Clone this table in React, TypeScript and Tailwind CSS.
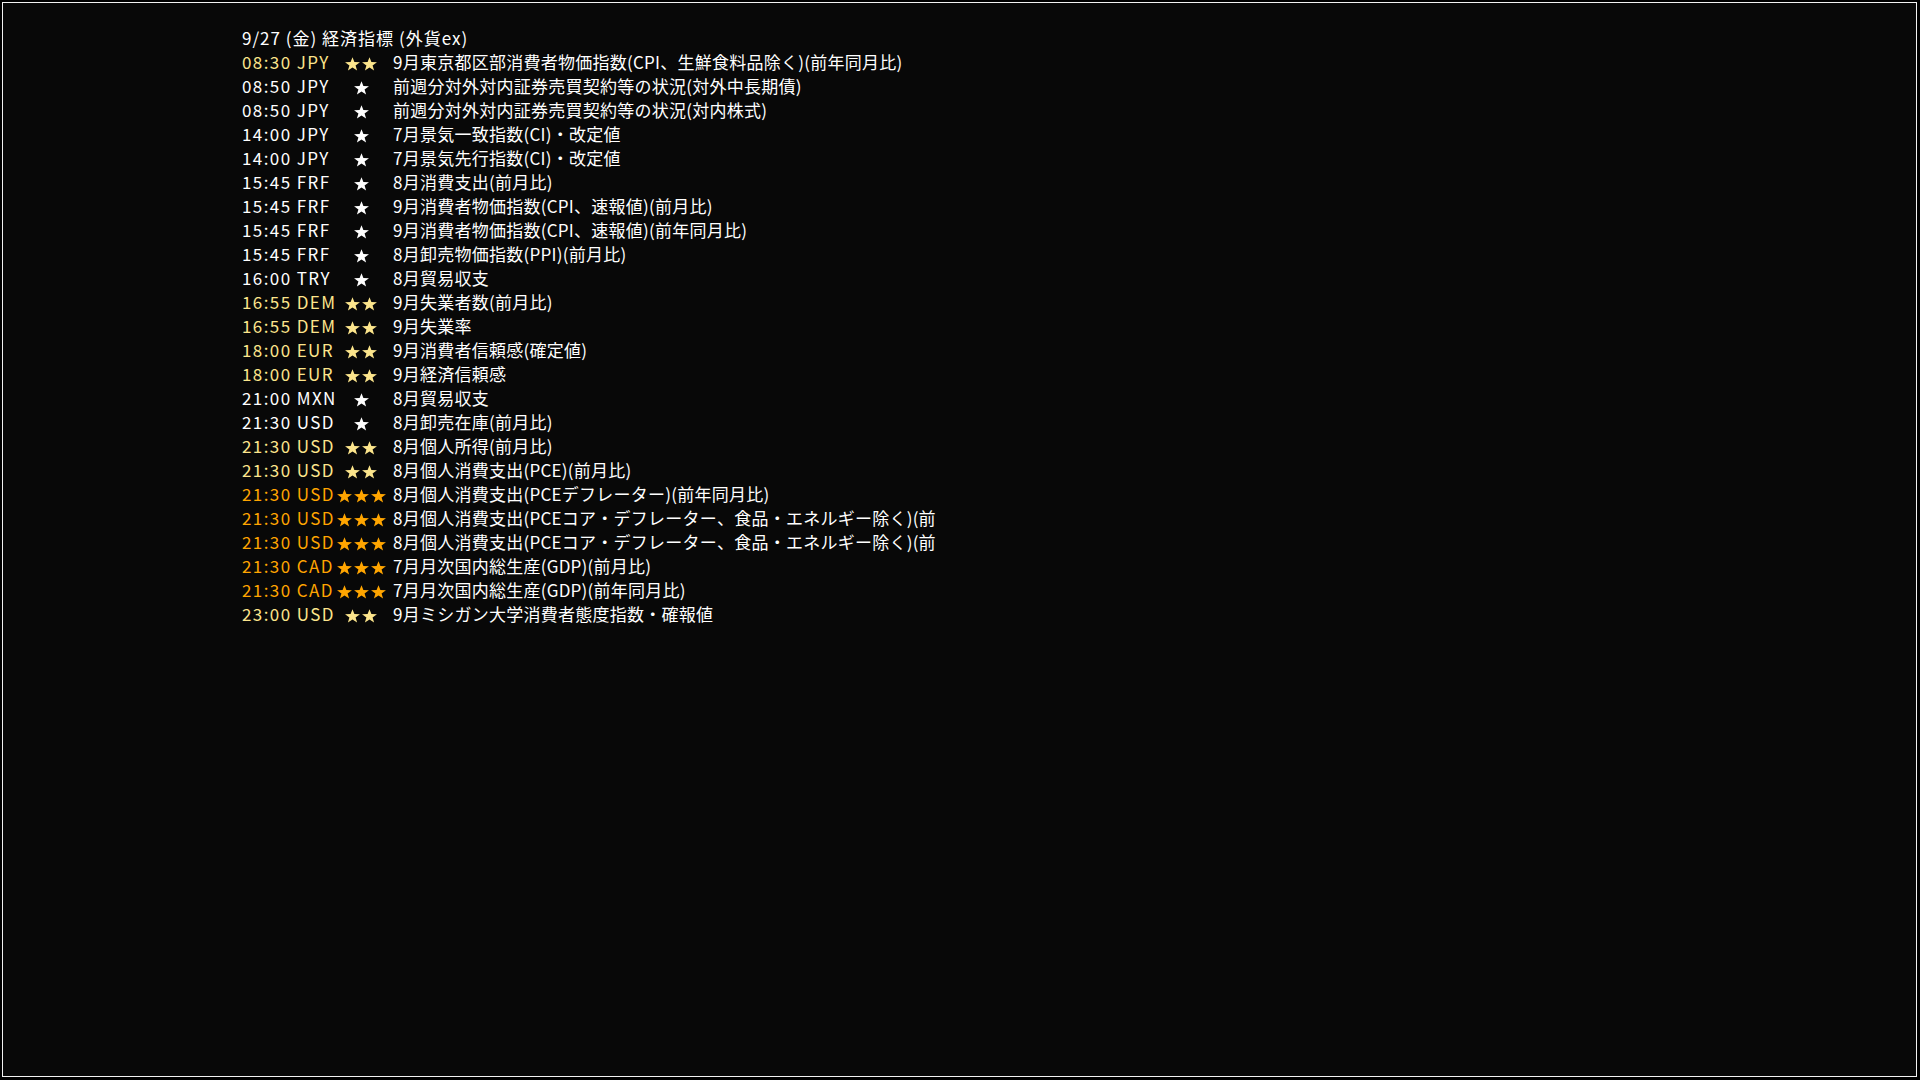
import React from "react";

type Row = { t: string; s: 1 | 2 | 3; d: string };

const rows: Row[] = [
  { t: "08:30 JPY", s: 2, d: "9月東京都区部消費者物価指数(CPI、生鮮食料品除く)(前年同月比)" },
  { t: "08:50 JPY", s: 1, d: "前週分対外対内証券売買契約等の状況(対外中長期債)" },
  { t: "08:50 JPY", s: 1, d: "前週分対外対内証券売買契約等の状況(対内株式)" },
  { t: "14:00 JPY", s: 1, d: "7月景気一致指数(CI)・改定値" },
  { t: "14:00 JPY", s: 1, d: "7月景気先行指数(CI)・改定値" },
  { t: "15:45 FRF", s: 1, d: "8月消費支出(前月比)" },
  { t: "15:45 FRF", s: 1, d: "9月消費者物価指数(CPI、速報値)(前月比)" },
  { t: "15:45 FRF", s: 1, d: "9月消費者物価指数(CPI、速報値)(前年同月比)" },
  { t: "15:45 FRF", s: 1, d: "8月卸売物価指数(PPI)(前月比)" },
  { t: "16:00 TRY", s: 1, d: "8月貿易収支" },
  { t: "16:55 DEM", s: 2, d: "9月失業者数(前月比)" },
  { t: "16:55 DEM", s: 2, d: "9月失業率" },
  { t: "18:00 EUR", s: 2, d: "9月消費者信頼感(確定値)" },
  { t: "18:00 EUR", s: 2, d: "9月経済信頼感" },
  { t: "21:00 MXN", s: 1, d: "8月貿易収支" },
  { t: "21:30 USD", s: 1, d: "8月卸売在庫(前月比)" },
  { t: "21:30 USD", s: 2, d: "8月個人所得(前月比)" },
  { t: "21:30 USD", s: 2, d: "8月個人消費支出(PCE)(前月比)" },
  { t: "21:30 USD", s: 3, d: "8月個人消費支出(PCEデフレーター)(前年同月比)" },
  { t: "21:30 USD", s: 3, d: "8月個人消費支出(PCEコア・デフレーター、食品・エネルギー除く)(前" },
  { t: "21:30 USD", s: 3, d: "8月個人消費支出(PCEコア・デフレーター、食品・エネルギー除く)(前" },
  { t: "21:30 CAD", s: 3, d: "7月月次国内総生産(GDP)(前月比)" },
  { t: "21:30 CAD", s: 3, d: "7月月次国内総生産(GDP)(前年同月比)" },
  { t: "23:00 USD", s: 2, d: "9月ミシガン大学消費者態度指数・確報値" },
];

function Star({ color }: { color: string }) {
  return (
    <svg width="15" height="14" viewBox="0 0 13 13" className="block" preserveAspectRatio="none">
      <polygon
        points="6.5,0.2 8.15,4.73 12.97,4.9 9.16,7.87 10.5,12.5 6.5,9.8 2.5,12.5 3.84,7.87 0.03,4.9 4.85,4.73"
        fill={color}
      />
    </svg>
  );
}

export default function App() {
  const colorFor = (s: number) =>
    s === 3 ? "#ffa500" : s === 2 ? "#fce58c" : "#ffffff";
  return (
    <div className="w-screen h-screen bg-black pl-[2px] pt-[2px] overflow-hidden">
      <div
        className="w-[1915px] h-[1075px] border border-[#f2f2f2] bg-[#080808] pl-[239px] pt-[23px] text-[17px] leading-[24px] text-white"
        style={{ fontFamily: '"Noto Sans CJK JP", "Noto Sans", sans-serif' }}
      >
        <div className="h-[24px] whitespace-nowrap tracking-[1px]">9/27 (金) 経済指標 (外貨ex)</div>
        {rows.map((r, i) => {
          const c = colorFor(r.s);
          return (
            <div key={i} className="flex h-[24px] whitespace-nowrap">
              <div className="w-[94px] tracking-[1.4px]" style={{ color: c }}>
                {r.t}
              </div>
              <div className="w-[50px] flex justify-center gap-[2px] pt-[7px]">
                {Array.from({ length: r.s }).map((_, k) => (
                  <Star key={k} color={c} />
                ))}
              </div>
              <div className="pl-[7px] text-white tracking-[0.25px]">{r.d}</div>
            </div>
          );
        })}
      </div>
    </div>
  );
}
